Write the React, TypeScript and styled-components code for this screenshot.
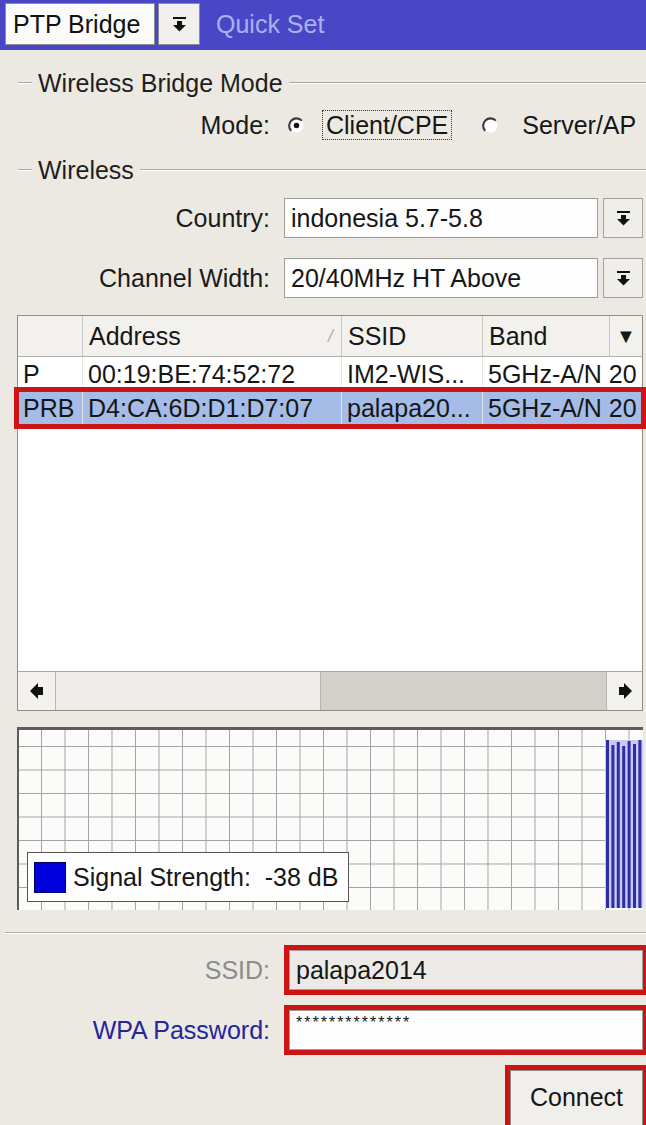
import styled, { createGlobalStyle } from 'styled-components';

const GlobalStyle = createGlobalStyle`
  html, body {
    margin: 0;
    padding: 0;
    background: #ece9e2;
  }
  body {
    font-family: 'Liberation Sans', Arial, sans-serif;
    font-size: 25px;
    color: #161616;
  }
`;

// Маленькая иконка "стрелка вниз с чертой" для выпадающих списков
const DropIcon = () => (
  <svg width="13" height="15" viewBox="0 0 13 15">
    <rect x="0" y="0" width="13" height="2" fill="#111" />
    <rect x="4" y="4" width="5" height="4" fill="#111" />
    <polygon points="0,8 13,8 6.5,14.5" fill="#111" />
  </svg>
);

const Radio = ({ checked }: { checked?: boolean }) => (
  <svg width="17" height="17" viewBox="0 0 16 16">
    <circle cx="8" cy="8" r="6.5" fill="#fff" />
    <path d="M13 3.4 A6.5 6.5 0 0 0 3 13" fill="none" stroke="#3a3a3a" strokeWidth="2" />
    {checked && <circle cx="8" cy="8" r="2.6" fill="#111" />}
  </svg>
);

const ScrollArrow = ({ dir }: { dir: 'left' | 'right' }) => (
  <svg width="14" height="18" viewBox="0 0 14 18">
    <g transform={dir === 'right' ? 'scale(-1,1) translate(-14,0)' : undefined}>
      <polygon points="0,9 8,1 8,17" fill="#111" />
      <rect x="7" y="5" width="6" height="8" fill="#111" />
    </g>
  </svg>
);

const bars = [0, 5, 2, 6, 1, 4, 0];

const SignalBars = () => (
  <svg width="38" height="168" viewBox="0 0 38 168">
    <rect x="0" y="0" width="38" height="168" fill="#c9c9f2" />
    {bars.map((top, i) => (
      <rect key={i} x={1 + i * 5.4} y={top} width="3" height={168 - top} fill="#2e2ea6" />
    ))}
  </svg>
);

export default function App() {
  return (
    <Window>
      <GlobalStyle />
      <TitleBar>
        <ModeBox>PTP Bridge</ModeBox>
        <TitleDrop>
          <DropIcon />
        </TitleDrop>
        <TitleText>Quick Set</TitleText>
      </TitleBar>

      <Body>
        <GroupHeader>Wireless Bridge Mode</GroupHeader>
        <FormRow $gap={9}>
          <Label>Mode:</Label>
          <RadioGroup>
            <Radio checked />
            <FocusText>Client/CPE</FocusText>
            <RadioSpacer />
            <Radio />
            <PlainText>Server/AP</PlainText>
          </RadioGroup>
        </FormRow>

        <GroupHeader $top={12}>Wireless</GroupHeader>
        <FormRow $gap={15}>
          <Label>Country:</Label>
          <Field>indonesia 5.7-5.8</Field>
          <DropBtn>
            <DropIcon />
          </DropBtn>
        </FormRow>
        <FormRow $gap={20}>
          <Label>Channel Width:</Label>
          <Field>20/40MHz HT Above</Field>
          <DropBtn>
            <DropIcon />
          </DropBtn>
        </FormRow>

        <Table>
          <HeaderRow>
            <HeadCell />
            <HeadCell>
              Address
              <SortMark>/</SortMark>
            </HeadCell>
            <HeadCell>SSID</HeadCell>
            <HeadCell>Band</HeadCell>
            <HeadCell $center>▼</HeadCell>
          </HeaderRow>
          <DataRow>
            <Cell>P</Cell>
            <Cell>00:19:BE:74:52:72</Cell>
            <Cell>IM2-WIS...</Cell>
            <BandCell>5GHz-A/N 20</BandCell>
          </DataRow>
          <DataRow $selected>
            <Cell>PRB</Cell>
            <Cell>D4:CA:6D:D1:D7:07</Cell>
            <Cell>palapa20...</Cell>
            <BandCell>5GHz-A/N 20</BandCell>
          </DataRow>
          <EmptyArea />
          <ScrollBar>
            <ScrollBtn>
              <ScrollArrow dir="left" />
            </ScrollBtn>
            <ScrollThumb />
            <ScrollTrack />
            <ScrollBtn>
              <ScrollArrow dir="right" />
            </ScrollBtn>
          </ScrollBar>
        </Table>

        <Graph>
          <SignalBars />
          <Legend>
            <LegendSwatch />
            Signal Strength:&nbsp; -38 dB
          </Legend>
        </Graph>

        <Separator />

        <FormRow $gap={16}>
          <Label $color="#8c8c8c">SSID:</Label>
          <Field $marked $muted>
            palapa2014
          </Field>
        </FormRow>
        <FormRow $gap={20}>
          <Label $color="#25259c">WPA Password:</Label>
          <Field $marked $small>
            **************
          </Field>
        </FormRow>
        <ButtonRow>
          <ConnectButton>Connect</ConnectButton>
        </ButtonRow>
      </Body>
    </Window>
  );
}

const Window = styled.div`
  width: 646px;
  height: 1125px;
  overflow: hidden;
  background: #ece9e2;
`;

const TitleBar = styled.div`
  height: 50px;
  box-sizing: border-box;
  padding: 3px 0 5px 5px;
  display: flex;
  align-items: stretch;
  gap: 3px;
  background: #4a47c6;
`;

const ModeBox = styled.div`
  width: 150px;
  box-sizing: border-box;
  display: flex;
  align-items: center;
  padding-left: 7px;
  background: #fbfbfa;
  border: 1px solid #8d8c96;
  color: #111;
`;

const TitleDrop = styled.div`
  width: 42px;
  display: flex;
  align-items: center;
  justify-content: center;
  box-sizing: border-box;
  background: #f1f0ed;
  border: 1px solid #8d8c96;
`;

const TitleText = styled.div`
  display: flex;
  align-items: center;
  margin-left: 13px;
  color: #a9b1f0;
`;

const Body = styled.div`
  padding: 0 3px 0 17px;
`;

const GroupHeader = styled.div<{ $top?: number }>`
  margin-top: ${({ $top }) => $top ?? 20}px;
  height: 26px;
  display: flex;
  align-items: center;
  white-space: nowrap;
  color: #1e1e1e;
  margin-right: -3px;

  &::before,
  &::after {
    content: '';
    height: 0;
    border-top: 1px solid #a9a7a2;
    border-bottom: 1px solid #ffffff;
  }
  &::before {
    width: 14px;
    margin: 0 6px 0 1px;
  }
  &::after {
    flex: 1;
    margin-left: 6px;
  }
`;

const FormRow = styled.div<{ $gap: number }>`
  margin-top: ${({ $gap }) => $gap}px;
  height: 40px;
  display: flex;
  align-items: stretch;
`;

const Label = styled.div<{ $color?: string }>`
  width: 253px;
  flex: none;
  margin-right: 14px;
  display: flex;
  align-items: center;
  justify-content: flex-end;
  white-space: nowrap;
  color: ${({ $color }) => $color ?? '#1a1a1a'};
`;

const RadioGroup = styled.div`
  display: flex;
  align-items: center;
  white-space: nowrap;

  svg {
    margin: 0 17px 0 4px;
  }
`;

const FocusText = styled.span`
  border: 1px dotted #333;
  padding: 0 3px;
  line-height: 28px;
`;

const RadioSpacer = styled.span`
  width: 26px;
`;

const PlainText = styled.span`
  line-height: 28px;
  margin-left: 6px;
`;

const Field = styled.div<{ $marked?: boolean; $muted?: boolean; $small?: boolean }>`
  flex: 1;
  min-width: 0;
  box-sizing: border-box;
  display: flex;
  align-items: ${({ $small }) => ($small ? 'flex-start' : 'center')};
  padding: ${({ $small }) => ($small ? '3px 0 0 6px' : '0 0 0 6px')};
  font-size: ${({ $small }) => ($small ? '16px' : '25px')};
  letter-spacing: ${({ $small }) => ($small ? '2px' : '0')};
  background: ${({ $muted }) => ($muted ? '#ebeae6' : '#fdfdfd')};
  border: 1px solid #9f9d98;
  white-space: nowrap;
  overflow: hidden;
  margin-left: ${({ $marked }) => ($marked ? '5px' : '0')};
  outline: ${({ $marked }) => ($marked ? '5px solid #cc1414' : 'none')};
`;

const DropBtn = styled.div`
  width: 40px;
  flex: none;
  margin-left: 5px;
  box-sizing: border-box;
  display: flex;
  align-items: center;
  justify-content: center;
  background: #efeeeb;
  border: 1px solid #a4a29d;
`;

const Table = styled.div`
  margin-top: 17px;
  width: 626px;
  height: 396px;
  box-sizing: border-box;
  border: 1px solid #8f8d88;
  background: #fff;
  display: flex;
  flex-direction: column;
`;

const columns = '65px 259px 141px 127px 1fr';

const HeaderRow = styled.div`
  height: 40px;
  flex: none;
  display: grid;
  grid-template-columns: ${columns};
  background: #f2f1ee;
  border-bottom: 1px solid #b3b1ac;
`;

const HeadCell = styled.div<{ $center?: boolean }>`
  display: flex;
  align-items: center;
  justify-content: ${({ $center }) => ($center ? 'center' : 'space-between')};
  padding: 0 ${({ $center }) => ($center ? '0' : '8px 0 6px')};
  border-right: 1px solid #c8c6c1;
  font-size: ${({ $center }) => ($center ? '20px' : '25px')};
  white-space: nowrap;
  overflow: hidden;

  &:last-child {
    border-right: none;
  }
`;

const SortMark = styled.span`
  color: #b0aeaa;
  font-size: 18px;
  font-style: italic;
`;

const DataRow = styled.div<{ $selected?: boolean }>`
  height: 34px;
  flex: none;
  display: grid;
  grid-template-columns: ${columns};
  position: relative;
  z-index: ${({ $selected }) => ($selected ? 1 : 0)};
  background: ${({ $selected }) => ($selected ? '#a5bce7' : '#ffffff')};
  outline: ${({ $selected }) => ($selected ? '5px solid #cc1414' : 'none')};
  outline-offset: -1px;
`;

const Cell = styled.div`
  display: flex;
  align-items: center;
  padding-left: 5px;
  border-right: 1px solid #e6e6e6;
  white-space: nowrap;
  overflow: hidden;
`;

const BandCell = styled(Cell)`
  grid-column: 4 / span 2;
  border-right: none;
`;

const EmptyArea = styled.div`
  flex: 1;
  background: #fff;
`;

const ScrollBar = styled.div`
  height: 38px;
  flex: none;
  display: flex;
  border-top: 1px solid #a8a6a1;
  background: #d5d2cc;
`;

const ScrollBtn = styled.div`
  width: 37px;
  flex: none;
  display: flex;
  align-items: center;
  justify-content: center;
  background: #f2f1ee;
  border-right: 1px solid #b8b6b1;

  &:last-child {
    border-right: none;
    border-left: 1px solid #b8b6b1;
    width: 35px;
  }
`;

const ScrollThumb = styled.div`
  width: 264px;
  flex: none;
  background: #eeede9;
  border-right: 1px solid #b8b6b1;
`;

const ScrollTrack = styled.div`
  flex: 1;
  background: #d3d0ca;
`;

const Graph = styled.div`
  position: relative;
  margin-top: 16px;
  width: 626px;
  height: 183px;
  box-sizing: border-box;
  border-top: 3px solid #5d5c5a;
  border-left: 2px solid #5d5c5a;
  background-color: #fbfbfa;
  background-image: linear-gradient(to right, #a3a3a3 1px, transparent 1px),
    linear-gradient(to bottom, #a3a3a3 1px, transparent 1px);
  background-size: 23.5px 23.5px;
  background-position: 22px 16px;
  display: flex;
  justify-content: flex-end;
  align-items: flex-end;
  padding-bottom: 2px;
`;

const Legend = styled.div`
  position: absolute;
  left: 8px;
  bottom: 8px;
  width: 322px;
  height: 50px;
  box-sizing: border-box;
  display: flex;
  align-items: center;
  gap: 7px;
  padding-left: 6px;
  background: #fdfdfd;
  border: 1px solid #555;
  white-space: nowrap;
`;

const LegendSwatch = styled.span`
  display: block;
  flex: none;
  width: 30px;
  height: 29px;
  background: #0000de;
  border: 1px solid #000060;
`;

const Separator = styled.div`
  margin: 22px -3px 0 -12px;
  border-top: 1px solid #b2b0ab;
  border-bottom: 1px solid #ffffff;
`;

const ButtonRow = styled.div`
  margin-top: 20px;
  display: flex;
  justify-content: flex-end;
`;

const ConnectButton = styled.button`
  width: 133px;
  height: 62px;
  padding: 0 0 8px;
  font-family: 'Liberation Sans', Arial, sans-serif;
  font-size: 25px;
  color: #161616;
  background: #f0efec;
  border: 1px solid #8f8d88;
  border-radius: 0;
  outline: 5px solid #cc1414;
`;
